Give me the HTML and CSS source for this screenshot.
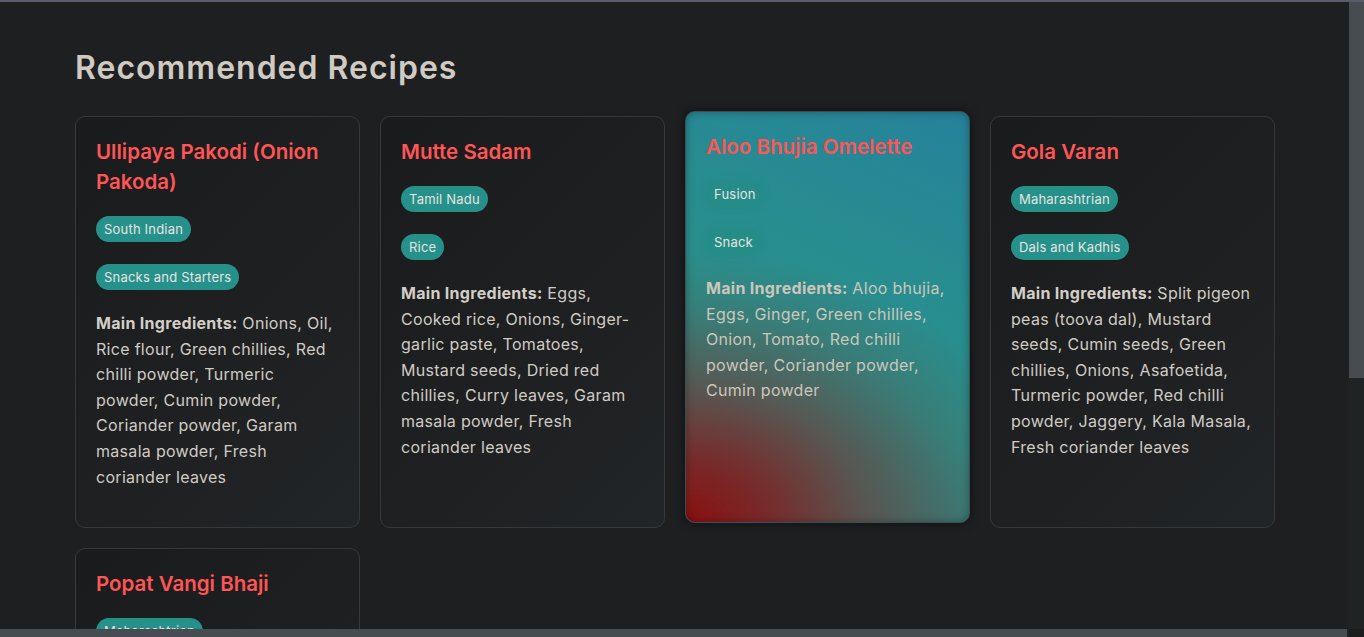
FILE: index.html
```html
<!DOCTYPE html>
<html lang="en">
<head>
<meta charset="utf-8">
<title>Recommended Recipes</title>
<link rel="stylesheet" href="styles.css">
</head>
<body>
<div class="frame">
  <div class="frame-main">
    <div class="viewport">
      <main class="page">
        <section class="recipes">
          <h2 class="section-title">Recommended Recipes</h2>
          <div class="grid">
            <article class="card">
              <h3 class="card-title">Ullipaya Pakodi (Onion Pakoda)</h3>
              <span class="tag">South Indian</span>
              <span class="tag">Snacks and Starters</span>
              <p class="ingredients"><strong>Main Ingredients:</strong> Onions, Oil, Rice flour, Green chillies, Red chilli powder, Turmeric powder, Cumin powder, Coriander powder, Garam masala powder, Fresh coriander leaves</p>
            </article>
            <article class="card">
              <h3 class="card-title">Mutte Sadam</h3>
              <span class="tag">Tamil Nadu</span>
              <span class="tag">Rice</span>
              <p class="ingredients"><strong>Main Ingredients:</strong> Eggs, Cooked rice, Onions, Ginger-garlic paste, Tomatoes, Mustard seeds, Dried red chillies, Curry leaves, Garam masala powder, Fresh coriander leaves</p>
            </article>
            <article class="card card-active">
              <h3 class="card-title">Aloo Bhujia Omelette</h3>
              <span class="tag">Fusion</span>
              <span class="tag">Snack</span>
              <p class="ingredients"><strong>Main Ingredients:</strong> Aloo bhujia, Eggs, Ginger, Green chillies, Onion, Tomato, Red chilli powder, Coriander powder, Cumin powder</p>
            </article>
            <article class="card">
              <h3 class="card-title">Gola Varan</h3>
              <span class="tag">Maharashtrian</span>
              <span class="tag">Dals and Kadhis</span>
              <p class="ingredients"><strong>Main Ingredients:</strong> Split pigeon peas (toova dal), Mustard seeds, Cumin seeds, Green chillies, Onions, Asafoetida, Turmeric powder, Red chilli powder, Jaggery, Kala Masala, Fresh coriander leaves</p>
            </article>
            <article class="card">
              <h3 class="card-title">Popat Vangi Bhaji</h3>
              <span class="tag">Maharashtrian</span>
              <span class="tag">Vegetables</span>
              <p class="ingredients"><strong>Main Ingredients:</strong> Brinjals, Field beans, Onions, Tomatoes, Goda masala, Turmeric powder, Red chilli powder, Jaggery, Fresh coriander leaves</p>
            </article>
          </div>
        </section>
      </main>
    </div>
    <div class="vscroll"><div class="vthumb"></div></div>
  </div>
  <div class="hscroll"><div class="hthumb"></div><div class="htrack"></div><div class="scroll-corner"></div></div>
</div>
</body>
</html>
```
FILE: styles.css
```css
html, body {
  margin: 0;
  padding: 0;
  height: 100%;
  overflow: hidden;
}

body {
  background: #1e1f21;
  font-family: Inter, "Open Sans", "Liberation Sans", sans-serif;
  color: #d0cbc3;
}

.frame {
  display: flex;
  flex-direction: column;
  height: 100%;
  border-top: 2px solid #5c5b6c;
  box-sizing: border-box;
}

.frame-main {
  display: flex;
  flex: 1;
  min-height: 0;
}

.viewport {
  flex: 1;
  min-width: 0;
  overflow: hidden;
}

.vscroll {
  width: 15px;
  flex: none;
  background: #202324;
}

.vthumb {
  height: 376px;
  background: #474c50;
}

.hscroll {
  display: flex;
  height: 8px;
  flex: none;
  background: #202324;
}

.hthumb {
  width: 1347px;
  background: #474c50;
}

.htrack {
  flex: 1;
}

.scroll-corner {
  width: 15px;
  background: #1b1c1e;
}

.page {
  width: 1350px;
  padding: 42px 0 86px;
}

.recipes {
  width: 1200px;
  margin: 0 auto;
}

.section-title {
  margin: 0 0 24px;
  font-size: 32px;
  line-height: 48px;
  font-weight: 600;
  color: #cfcac2;
  letter-spacing: 1px;
}

.grid {
  display: grid;
  grid-template-columns: repeat(4, 1fr);
  gap: 20px;
}

.card {
  display: flex;
  flex-direction: column;
  align-items: flex-start;
  padding: 20px;
  border: 1px solid #36383b;
  border-radius: 10px;
  background: linear-gradient(135deg, #1a1b1d 0%, #1e2022 60%, #222527 100%);
}

.card-title {
  margin: 0 0 19px;
  font-size: 20.5px;
  line-height: 30px;
  font-weight: 600;
  color: #ff5555;
}

.tag {
  display: block;
  padding: 4px 8px;
  font-size: 13px;
  line-height: 18px;
  letter-spacing: 0.2px;
  border-radius: 13px;
  background: #26918a;
  color: #e6e4e0;
}

.tag + .tag {
  margin-top: 22px;
}

.ingredients {
  margin: 21px 0 17px;
  font-size: 16px;
  line-height: 25.6px;
  letter-spacing: 0.3px;
  color: #d0cbc3;
}

.ingredients strong {
  font-weight: 700;
  color: #d3cec6;
}

.card-active {
  transform: translateY(-5px);
  border-color: #3b4f55;
  background:
    radial-gradient(ellipse 400px 300px at 0% 100%, #8a1010 0%, rgba(125, 35, 35, 0.92) 20%, rgba(100, 72, 68, 0.75) 45%, rgba(90, 85, 80, 0.3) 70%, rgba(90, 85, 80, 0) 90%),
    linear-gradient(205deg, #25829b 0%, #288d90 35%, #2a9089 62%, #3c7471 100%);
  box-shadow: 0 0 10px rgba(0, 0, 0, 0.55), inset 0 0 8px rgba(0, 0, 0, 0.3);
}

.card-active .tag {
  background: rgba(34, 140, 132, 0.55);
  box-shadow: 0 0 5px 2px rgba(34, 140, 132, 0.45);
}

.card-active .ingredients,
.card-active .ingredients strong {
  color: #cdc6bb;
}
```
